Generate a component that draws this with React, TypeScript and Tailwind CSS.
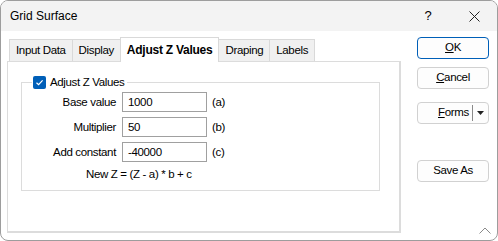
import React from 'react';

const tabs = ['Input Data', 'Display', 'Adjust Z Values', 'Draping', 'Labels'];

const rows = [
  { label: 'Base value', value: '1000', tag: '(a)' },
  { label: 'Multiplier', value: '50', tag: '(b)' },
  { label: 'Add constant', value: '-40000', tag: '(c)' },
];

const Btn: React.FC<{ children: React.ReactNode; primary?: boolean; className?: string }> = ({ children, primary, className = '' }) => (
  <button
    className={`h-[22px] w-[72px] rounded-[4px] border bg-[#fdfdfd] text-[11.5px] tracking-[-0.35px] text-black ${
      primary ? 'border-[#005fb8]' : 'border-[#d1d1d1]'
    } ${className}`}
  >
    {children}
  </button>
);

export default function App() {
  return (
    <div
      className="relative w-[498px] h-[241px] overflow-hidden rounded-[8px] border border-[#9d9d9d] bg-white text-[11.5px] tracking-[-0.35px] text-black"
      style={{ fontFamily: '"Liberation Sans", Arial, sans-serif' }}
    >
      {/* Title bar */}
      <div className="flex h-[30px] items-center bg-[#f3f3f3] pl-[9px]">
        <span className="flex-1 text-[12px] tracking-normal">Grid Surface</span>
        <span className="w-[46px] text-center text-[13px]">?</span>
        <span className="flex w-[46px] items-center justify-center">
          <svg width="11" height="11" viewBox="0 0 11 11">
            <path d="M0.5 0.5 L10.5 10.5 M10.5 0.5 L0.5 10.5" stroke="#222" strokeWidth="1" />
          </svg>
        </span>
      </div>

      <div className="flex">
        {/* Tab control */}
        <div className="ml-[6px] mt-[6px] w-[394px]">
          <div className="flex h-[24px] items-end pl-[2px]">
            {tabs.map((t) =>
              t === 'Adjust Z Values' ? (
                <div
                  key={t}
                  className="relative z-10 -mb-px -mr-px flex h-[25px] items-center border border-b-0 border-[#d9d9d9] bg-white px-[6px] text-[12px] font-bold tracking-[-0.25px]"
                >
                  {t}
                </div>
              ) : (
                <div
                  key={t}
                  className="-mr-px flex h-[22px] items-center border border-b-0 border-[#d9d9d9] bg-[#f0f0f0] px-[6px]"
                >
                  {t}
                </div>
              )
            )}
          </div>
          <div className="h-[172px] border border-[#dcdcdc] border-b-2 border-r-2 pl-[13px] pt-[12px]">
            <fieldset className="h-[117px] w-[359px] border border-[#dcdcdc]">
              <legend className="ml-[10px] flex items-center gap-[4px] px-[1px] pr-[3px]">
                <span className="flex h-[13px] w-[13px] items-center justify-center rounded-[2px] bg-[#005fb8]">
                  <svg width="9" height="9" viewBox="0 0 9 9">
                    <path d="M1.5 4.7 L3.6 6.7 L7.6 2.3" fill="none" stroke="white" strokeWidth="1.2" />
                  </svg>
                </span>
                <span>Adjust Z Values</span>
              </legend>
              <div className="flex flex-col gap-[5px] pt-[1px]">
                {rows.map((r) => (
                  <div key={r.label} className="flex items-center">
                    <span className="w-[94px] text-right">{r.label}</span>
                    <div className="ml-[6px] flex h-[20px] w-[85px] items-center border border-[#a0a0a0] px-[5px]">
                      {r.value}
                    </div>
                    <span className="ml-[5px]">{r.tag}</span>
                  </div>
                ))}
                <div className="pl-[64px] leading-[14px]">New Z = (Z - a) * b + c</div>
              </div>
            </fieldset>
          </div>
        </div>

        {/* Buttons */}
        <div className="ml-[16px] mt-[6px] flex flex-col">
          <Btn primary>
            <span className="underline">O</span>K
          </Btn>
          <Btn className="mt-[8px]">
            <span className="underline">C</span>ancel
          </Btn>
          <div className="mt-[13px] flex h-[22px] w-[72px] items-center rounded-[4px] border border-[#d1d1d1] bg-[#fdfdfd]">
            <span className="flex-1 pl-[20px]">
              <span className="underline">F</span>orms
            </span>
            <span className="h-[16px] w-px bg-[#8a8a8a]" />
            <span className="flex w-[15px] justify-center">
              <svg width="7" height="4" viewBox="0 0 7 4">
                <path d="M0 0 L7 0 L3.5 4 Z" fill="#222" />
              </svg>
            </span>
          </div>
          <Btn className="mt-[36px]">Save As</Btn>
        </div>
      </div>

      {/* Size grip */}
      <svg className="absolute bottom-[6px] right-[6px]" width="12" height="7" viewBox="0 0 12 7">
        <path d="M0.5 6.5 L6 1 L11.5 6.5" fill="none" stroke="#8a8a8a" strokeWidth="1" />
      </svg>
    </div>
  );
}
